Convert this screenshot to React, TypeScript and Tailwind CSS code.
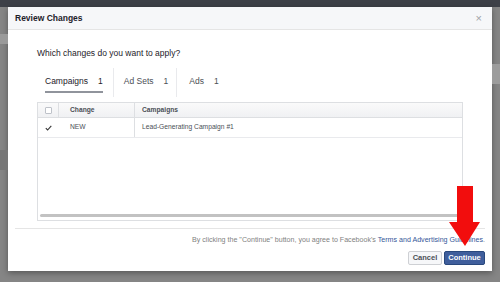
import React from "react";

const font = { fontFamily: '"Liberation Sans", Arial, sans-serif' };

const Tab = ({ label, count, active }: { label: string; count: number; active?: boolean }) => (
  <div className="flex h-full items-start">
    <div className="flex flex-col">
      <div className={`flex gap-[10px] pt-[8px] text-[8.5px] leading-[10px] ${active ? "text-[#1d2129]" : "text-[#4b4f56]"}`}>
        <span>{label}</span>
        <span>{count}</span>
      </div>
      <div className={`mt-[5px] h-[2px] ${active ? "bg-[#90949c]" : "bg-transparent"}`} />
    </div>
  </div>
);

export default function App() {
  return (
    <div style={font} className="relative h-[282px] w-[500px] overflow-hidden bg-[#858585]">
      {/* dim page behind */}
      <div className="h-[7px] bg-[#3d4047]" />
      <div className="absolute left-0 top-[34px] h-[10px] w-[8px] bg-[#9a9a9a]" />
      <div className="absolute left-0 top-[150px] h-[20px] w-[8px] bg-[#767676]" />
      <div className="absolute right-0 top-[64px] h-[20px] w-[8px] bg-[#9c9c9c]" />

      <div className="ml-[8px] flex h-[264px] w-[484px] flex-col bg-white shadow-[0_2px_6px_rgba(0,0,0,0.35)]">
        <div className="flex h-[23px] items-center justify-between border-b border-[#e5e5e5] bg-[#f6f7f9] px-[7px]">
          <span className="text-[8.5px] font-bold text-[#1d2129]">Review Changes</span>
          <span className="pr-[3px] text-[11px] leading-none text-[#a0a3a8]">×</span>
        </div>

        <div className="flex flex-col px-[29px]">
          <div className="pt-[18px] text-[8.5px] leading-[10px] text-[#1d2129]">Which changes do you want to apply?</div>

          <div className="mt-[10px] flex h-[29px] items-stretch pl-[8px]">
            <Tab label="Campaigns" count={1} active />
            <div className="mx-[10px] w-px bg-[#e9eaed]" />
            <Tab label="Ad Sets" count={1} />
            <div className="ml-[8px] mr-[12px] w-px bg-[#e9eaed]" />
            <Tab label="Ads" count={1} />
          </div>

          <div className="mt-[5px] flex h-[119px] flex-col border border-[#dddfe2]">
            <div className="flex h-[15px] items-stretch border-b border-[#dddfe2] bg-gradient-to-b from-[#fafafa] to-[#f0f1f3] text-[6.7px] font-bold text-[#4b4f56]">
              <div className="flex w-[21px] items-center justify-center border-r border-[#dddfe2]">
                <div className="h-[7px] w-[7px] rounded-[1px] border border-[#bec2c9] bg-white" />
              </div>
              <div className="flex w-[76px] items-center border-r border-[#dddfe2] pl-[11px]">Change</div>
              <div className="flex flex-1 items-center pl-[7px]">Campaigns</div>
            </div>
            <div className="flex h-[20px] items-stretch border-b border-[#e9eaed] text-[6.7px] text-[#4b4f56]">
              <div className="flex w-[21px] items-center justify-center">
                <div className="flex h-[7px] w-[7px] items-center justify-center">
                  <svg width="7" height="6" viewBox="0 0 7 6">
                    <path d="M0.8 3.2 L2.6 5 L6.3 0.8" fill="none" stroke="#333" strokeWidth="1.1" />
                  </svg>
                </div>
              </div>
              <div className="flex w-[76px] items-center border-r border-[#dddfe2] pl-[11px]">NEW</div>
              <div className="flex flex-1 items-center pl-[7px]">Lead-Generating Campaign #1</div>
            </div>
            <div className="flex-1" />
            <div className="mx-[2px] mb-[3px] h-[3px] rounded-full bg-[#c2c2c2]" />
          </div>
        </div>

        <div className="mx-[7px] mt-[7px] h-px bg-[#e5e5e5]" />

        <div className="flex flex-col items-end px-[7px]">
          <div className="pt-[7px] text-[7.1px] leading-[9px] text-[#7f7f7f]">
            By clicking the "Continue" button, you agree to Facebook's{" "}
            <span className="text-[#365899]">Terms and Advertising Guidelines</span>.
          </div>
          <div className="mt-[6px] flex gap-[2px]">
            <div className="flex h-[14px] w-[34px] items-center justify-center rounded-[2px] border border-[#ced0d4] bg-[#f6f7f9] text-[7.5px] font-bold text-[#4b4f56]">
              Cancel
            </div>
            <div className="flex h-[14px] w-[41px] items-center justify-center rounded-[2px] border border-[#29487d] bg-[#3f5e9c] text-[7.5px] font-bold text-white">
              Continue
            </div>
          </div>
        </div>
      </div>

      {/* red arrow annotation */}
      <svg className="absolute left-[448px] top-[186px]" width="33" height="61" viewBox="0 0 33 61">
        <path d="M9 0 H25 V36 H32 L17 60 L1 36 H9 Z" fill="#f20d0d" />
      </svg>
    </div>
  );
}
